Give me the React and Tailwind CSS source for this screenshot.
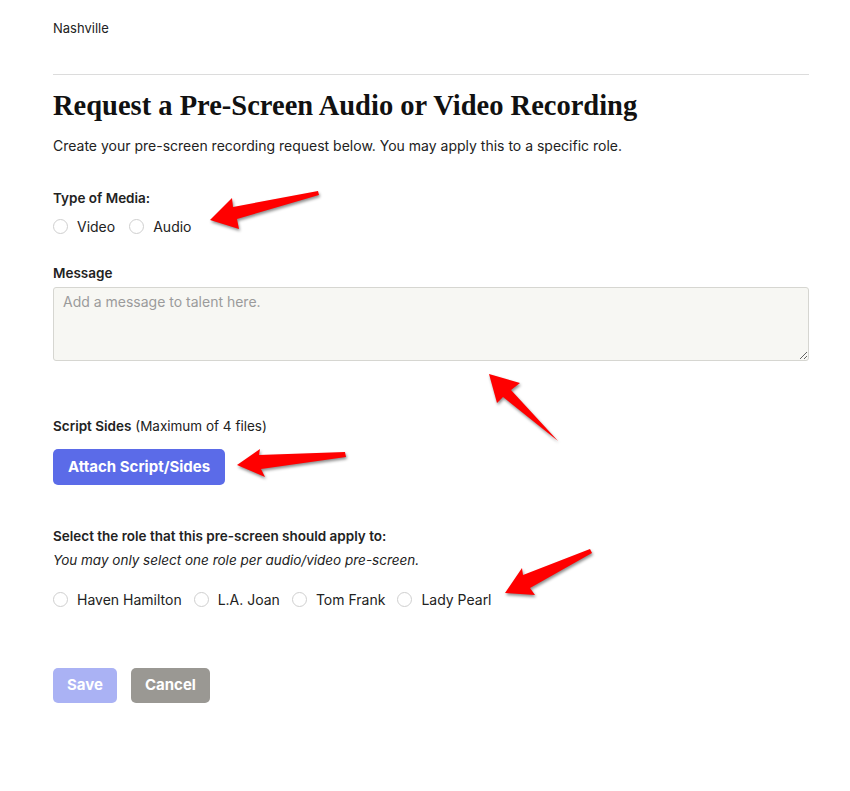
import React from "react";

const sans = { fontFamily: "Inter, 'Liberation Sans', sans-serif" };

function Radio({ label }) {
  return (
    <label className="flex items-center gap-[9px] cursor-pointer">
      <span className="w-[15px] h-[15px] rounded-full border border-[#cfcfcf] bg-white shrink-0" />
      <span className="text-[14px] text-[#222]">{label}</span>
    </label>
  );
}

function Arrow({ points }) {
  return (
    <polygon
      points={points}
      fill="#ff0000"
      style={{ filter: "drop-shadow(1px 2px 1.5px rgba(0,0,0,0.45))" }}
    />
  );
}

export default function App() {
  return (
    <div className="relative min-h-[791px] bg-white text-[#222]" style={sans}>
      <div className="pl-[53px] pr-[41px] pt-[20px]">
        <div className="text-[13px] leading-[16px]">Nashville</div>
        <div className="mt-[38px] border-t border-[#dcdcdc]" />

        <h1
          className="mt-[15px] text-[28.5px] leading-[32px] font-bold text-[#111]"
          style={{ fontFamily: "'Liberation Serif', 'DejaVu Serif', serif" }}
        >
          Request a Pre-Screen Audio or Video Recording
        </h1>
        <p className="mt-[15px] text-[14px] leading-[18px]">
          Create your pre-screen recording request below. You may apply this to a specific role.
        </p>

        <div className="mt-[34px] text-[13.5px] leading-[18px] font-semibold">Type of Media:</div>
        <div className="mt-[9px] flex items-center gap-[14px]">
          <Radio label="Video" />
          <Radio label="Audio" />
        </div>

        <div className="mt-[27px] text-[13.5px] leading-[18px] font-semibold">Message</div>
        <textarea
          className="mt-[5px] block w-full h-[74px] rounded-[3px] border border-[#d6d6d1] bg-[#f7f7f3] px-[9px] py-[5px] text-[14px] leading-[18px] placeholder:text-[#9b9b9b] outline-none"
          placeholder="Add a message to talent here."
        />

        <div className="mt-[56px] text-[13.5px] leading-[18px]">
          <span className="font-semibold">Script Sides</span> (Maximum of 4 files)
        </div>
        <button className="mt-[14px] h-[36px] px-[15px] rounded-[5px] bg-[#5b6be8] text-white text-[15px] font-bold">
          Attach Script/Sides
        </button>

        <div className="mt-[42px] text-[13.5px] leading-[18px] font-semibold">
          Select the role that this pre-screen should apply to:
        </div>
        <div className="mt-[6px] text-[13.5px] leading-[18px] italic">
          You may only select one role per audio/video pre-screen.
        </div>
        <div className="mt-[20px] flex items-center gap-[12px]">
          <Radio label="Haven Hamilton" />
          <Radio label="L.A. Joan" />
          <Radio label="Tom Frank" />
          <Radio label="Lady Pearl" />
        </div>

        <div className="mt-[58px] flex gap-[14px]">
          <button className="h-[35px] px-[14px] rounded-[5px] bg-[#aab2f4] text-white text-[15px] font-bold">
            Save
          </button>
          <button className="h-[35px] px-[14px] rounded-[5px] bg-[#9a9893] text-white text-[15px] font-bold">
            Cancel
          </button>
        </div>
      </div>

      {/* annotation arrows drawn over the form */}
      <svg className="absolute inset-0 pointer-events-none" width="850" height="791">
        <Arrow points="210,220 232,198 233,207 318,191 319,195 237,219 239,229" />
        <Arrow points="489,374 520,383 511,390 558,441 503,397 497,403" />
        <Arrow points="237,465 260,449 259,455 345,452 346,457 261,469 265,477" />
        <Arrow points="505,593 522,568 523,575 590,549 592,553 530,588 535,595" />
      </svg>
    </div>
  );
}
